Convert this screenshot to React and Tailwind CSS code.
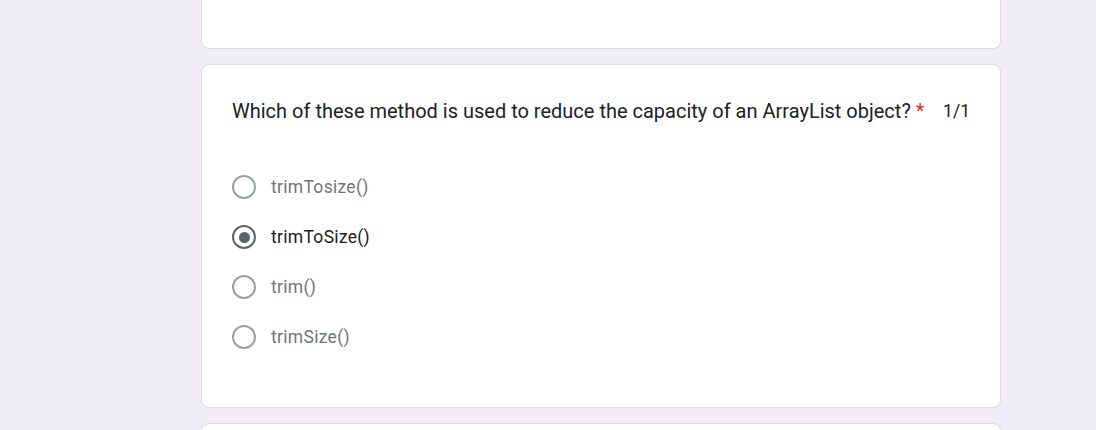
const options = [
  { label: "trimTosize()", selected: false },
  { label: "trimToSize()", selected: true },
  { label: "trim()", selected: false },
  { label: "trimSize()", selected: false },
];

function Radio({ selected }) {
  return (
    <div
      className={`flex h-[24px] w-[24px] shrink-0 items-center justify-center rounded-full border-2 ${
        selected ? "border-[#5f6368]" : "border-[#9aa0a6]"
      }`}
    >
      {selected && <div className="h-[11px] w-[11px] rounded-full bg-[#5f6368]" />}
    </div>
  );
}

export default function App() {
  return (
    <div
      className="min-h-[430px] w-full overflow-hidden bg-[#f0ebf8]"
      style={{ fontFamily: "Roboto, Arial, sans-serif" }}
    >
      <div className="flex w-[800px] flex-col gap-[15px] -mt-[20px] ml-[201px]">
        <div className="h-[69px] rounded-lg border border-[#dadce0] bg-white" />

        <div className="rounded-lg border border-[#dadce0] bg-white pl-[30px] pr-[30px] pt-[31px] pb-[45px]">
          <div className="flex items-start justify-between">
            <div className="text-[20px] leading-[30px] text-[#202124]">
              Which of these method is used to reduce the capacity of an ArrayList object?
              <span className="ml-[5px] text-[#d93025]">*</span>
            </div>
            <div className="shrink-0 pl-[16px] text-[17.5px] leading-[30px] text-[#202124]">1/1</div>
          </div>

          <div className="mt-[36px] flex flex-col">
            {options.map((o) => (
              <div key={o.label} className="flex h-[50px] items-center gap-[15px]">
                <Radio selected={o.selected} />
                <span
                  className={`text-[17.5px] tracking-[0.3px] ${
                    o.selected ? "text-[#202124]" : "text-[#70757a]"
                  }`}
                >
                  {o.label}
                </span>
              </div>
            ))}
          </div>
        </div>

        <div className="h-[60px] rounded-lg border border-[#dadce0] bg-white" />
      </div>
    </div>
  );
}
